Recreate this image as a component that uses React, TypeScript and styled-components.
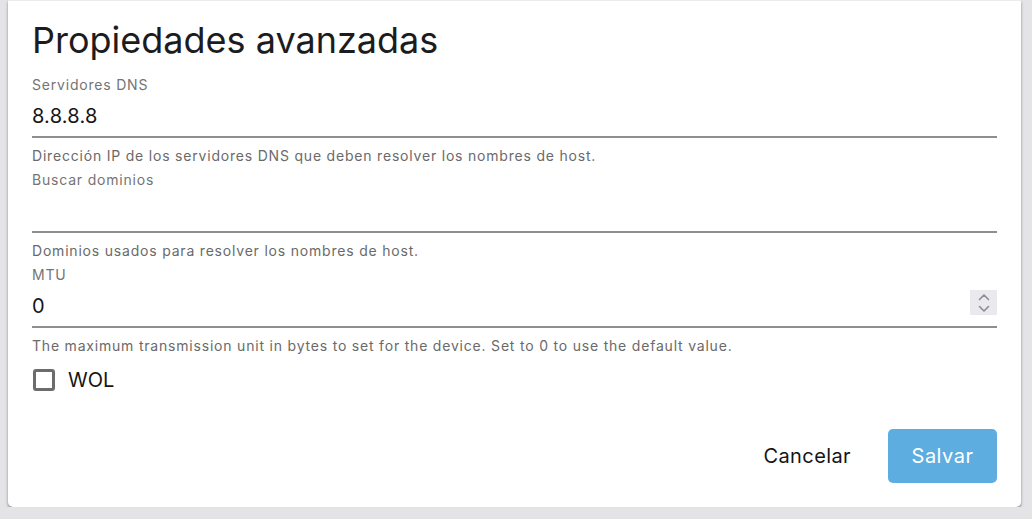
import React, { useState } from 'react'
import styled, { createGlobalStyle } from 'styled-components'

const GlobalStyle = createGlobalStyle`
  html, body {
    margin: 0;
    padding: 0;
    background: #e4e4e6;
    font-family: Inter, "Noto Sans", Roboto, sans-serif;
  }
  * {
    box-sizing: border-box;
  }
`

interface IFieldProps {
  label: string
  value: string
  helper: string
  numeric?: boolean
  onChange: (v: string) => void
}

const Field: React.FC<IFieldProps> = ({ label, value, helper, numeric, onChange }) => {
  return (
    <StyledField>
      <FieldLabel>{label}</FieldLabel>
      <InputRow>
        <TextInput value={value} onChange={(e) => onChange(e.target.value)} />
        {numeric && (
          <Spinner>
            <svg width="14" height="22" viewBox="0 0 14 22" fill="none">
              <path d="M2.5 7.5 L7 3 L11.5 7.5" stroke="#8b8b99" strokeWidth="1.6" strokeLinecap="round" strokeLinejoin="round" />
              <path d="M2.5 14.5 L7 19 L11.5 14.5" stroke="#8b8b99" strokeWidth="1.6" strokeLinecap="round" strokeLinejoin="round" />
            </svg>
          </Spinner>
        )}
      </InputRow>
      <Helper>{helper}</Helper>
    </StyledField>
  )
}

const App: React.FC = () => {
  const [dns, setDns] = useState('8.8.8.8')
  const [domains, setDomains] = useState('')
  const [mtu, setMtu] = useState('0')
  const [wol, setWol] = useState(false)

  return (
    <>
      <GlobalStyle />
      <Card>
        <Title>Propiedades avanzadas</Title>
        <Fields>
          <Field
            label="Servidores DNS"
            value={dns}
            onChange={setDns}
            helper="Dirección IP de los servidores DNS que deben resolver los nombres de host."
          />
          <Field
            label="Buscar dominios"
            value={domains}
            onChange={setDomains}
            helper="Dominios usados para resolver los nombres de host."
          />
          <Field
            label="MTU"
            value={mtu}
            onChange={setMtu}
            numeric
            helper="The maximum transmission unit in bytes to set for the device. Set to 0 to use the default value."
          />
        </Fields>
        <CheckRow onClick={() => setWol(!wol)}>
          <CheckBox checked={wol} />
          <CheckLabel>WOL</CheckLabel>
        </CheckRow>
        <Footer>
          <TextButton>Cancelar</TextButton>
          <PrimaryButton>Salvar</PrimaryButton>
        </Footer>
      </Card>
    </>
  )
}

export default App

const Card = styled.div`
  margin: 0 11px 0 8px;
  height: 507px;
  background: #ffffff;
  border-top: 1px solid #ececec;
  border-radius: 0 0 5px 5px;
  box-shadow: 0 2px 3px rgba(0, 0, 0, 0.4);
  padding: 17px 24px 24px 24px;
  display: flex;
  flex-direction: column;
`

const Title = styled.h1`
  margin: 0;
  font-size: 36px;
  line-height: 44px;
  font-weight: 400;
  color: #1c1c1e;
`

const Fields = styled.div`
  margin-top: 13px;
  display: flex;
  flex-direction: column;
  gap: 4px;
`

const StyledField = styled.div`
  display: flex;
  flex-direction: column;
`

const FieldLabel = styled.label`
  font-size: 14px;
  line-height: 20px;
  letter-spacing: 0.8px;
  color: #747474;
`

const InputRow = styled.div`
  display: flex;
  align-items: center;
  height: 43px;
  border-bottom: 2px solid #8e8e8e;
`

const TextInput = styled.input`
  flex: 1;
  min-width: 0;
  border: none;
  outline: none;
  background: transparent;
  padding: 0;
  height: 41px;
  font-family: inherit;
  font-size: 20px;
  letter-spacing: 0.2px;
  color: #151515;
`

const Spinner = styled.div`
  width: 27px;
  height: 25px;
  margin-top: -6px;
  background: #e9e9ee;
  display: flex;
  align-items: center;
  justify-content: center;
`

const Helper = styled.div`
  margin-top: 8px;
  font-size: 14px;
  line-height: 20px;
  letter-spacing: 0.8px;
  color: #6a6a6a;
`

const CheckRow = styled.div`
  margin-top: 13px;
  display: flex;
  align-items: center;
  gap: 13px;
  cursor: pointer;
  height: 22px;
`

const CheckBox = styled.div<{ checked: boolean }>`
  width: 22px;
  height: 22px;
  margin-left: 1px;
  border: 3px solid #6c6c6c;
  border-radius: 3px;
  background: ${({ checked }) => (checked ? '#6c6c6c' : '#ffffff')};
`

const CheckLabel = styled.span`
  font-size: 20px;
  color: #151515;
`

const Footer = styled.div`
  margin-top: auto;
  display: flex;
  justify-content: flex-end;
  align-items: center;
  gap: 13px;
`

const TextButton = styled.button`
  border: none;
  background: transparent;
  font-family: inherit;
  font-size: 20px;
  letter-spacing: 0.4px;
  color: #151515;
  padding: 14px 24px;
  cursor: pointer;
`

const PrimaryButton = styled.button`
  border: none;
  background: #5eade0;
  border-radius: 5px;
  font-family: inherit;
  font-size: 20px;
  letter-spacing: 0.5px;
  line-height: 26px;
  color: #ffffff;
  width: 109px;
  height: 54px;
  cursor: pointer;
`
